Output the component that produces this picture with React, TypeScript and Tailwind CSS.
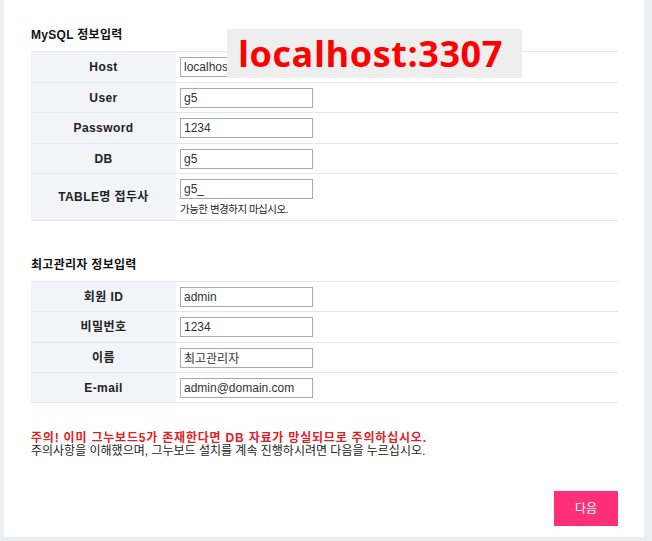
import React from 'react';

type Row = { label: string; value: string; h: number; help?: string };

const mysqlRows: Row[] = [
  { label: 'Host', value: 'localhost', h: 31 },
  { label: 'User', value: 'g5', h: 30 },
  { label: 'Password', value: '1234', h: 31 },
  { label: 'DB', value: 'g5', h: 30 },
  { label: 'TABLE명 접두사', value: 'g5_', h: 47, help: '가능한 변경하지 마십시오.' },
];

const adminRows: Row[] = [
  { label: '회원 ID', value: 'admin', h: 30 },
  { label: '비밀번호', value: '1234', h: 31 },
  { label: '이름', value: '최고관리자', h: 30 },
  { label: 'E-mail', value: 'admin@domain.com', h: 30 },
];

function FormTable({ rows }: { rows: Row[] }) {
  return (
    <div className="w-[587px] border-b border-[#e3e6ea]">
      {rows.map((r) => (
        <div key={r.label} className="flex border-t border-[#e3e6ea]" style={{ height: r.h }}>
          <div className="w-[145px] shrink-0 bg-[#f1f4f8] flex items-center justify-center text-[12px] font-bold tracking-[0.4px] text-[#222]">
            {r.label}
          </div>
          <div className="flex-1 flex flex-col justify-center pl-[4px]">
            <input
              defaultValue={r.value}
              className="w-[133px] h-[20px] border border-[#a9a9a9] bg-white px-[3px] text-[12px] text-[#333] outline-none"
            />
            {r.help && (
              <p className="mt-[4px] text-[10.5px] leading-[13px] tracking-[-0.5px] text-[#222]">{r.help}</p>
            )}
          </div>
        </div>
      ))}
    </div>
  );
}

export default function App() {
  return (
    <div
      className="w-[652px] h-[541px] bg-[#eceef2] pl-[4px] pr-[8px] pb-[4px]"
      style={{ fontFamily: '"Liberation Sans", "Noto Sans CJK KR", sans-serif' }}
    >
      <div className="relative h-full bg-white pl-[27px] pt-[27px]">
        <h2 className="text-[12px] leading-[16px] font-bold tracking-[0.3px] text-[#111] mb-[8px]">MySQL 정보입력</h2>
        <FormTable rows={mysqlRows} />

        <h2 className="mt-[36px] text-[12px] leading-[16px] font-bold tracking-[0.3px] text-[#111] mb-[8px]">
          최고관리자 정보입력
        </h2>
        <FormTable rows={adminRows} />

        <div className="mt-[29px] text-[12px] leading-[13px]">
          <p className="font-bold tracking-[0.8px] text-[#e0201f]">
            주의! 이미 그누보드5가 존재한다면 DB 자료가 망실되므로 주의하십시오.
          </p>
          <p className="text-[#222]">주의사항을 이해했으며, 그누보드 설치를 계속 진행하시려면 다음을 누르십시오.</p>
        </div>

        <div className="flex justify-end w-[587px] mt-[33px]">
          <button className="w-[64px] h-[35px] bg-[#fd2f78] text-white text-[12px]">다음</button>
        </div>

        <div
          className="absolute left-[223px] top-[29px] w-[295px] h-[49px] bg-[#eeeeee] flex items-center pl-[11px] text-[36px] tracking-[0.6px] font-bold text-[#ff0000]"
          style={{ fontFamily: '"Open Sans", sans-serif' }}
        >
          localhost:3307
        </div>
      </div>
    </div>
  );
}
